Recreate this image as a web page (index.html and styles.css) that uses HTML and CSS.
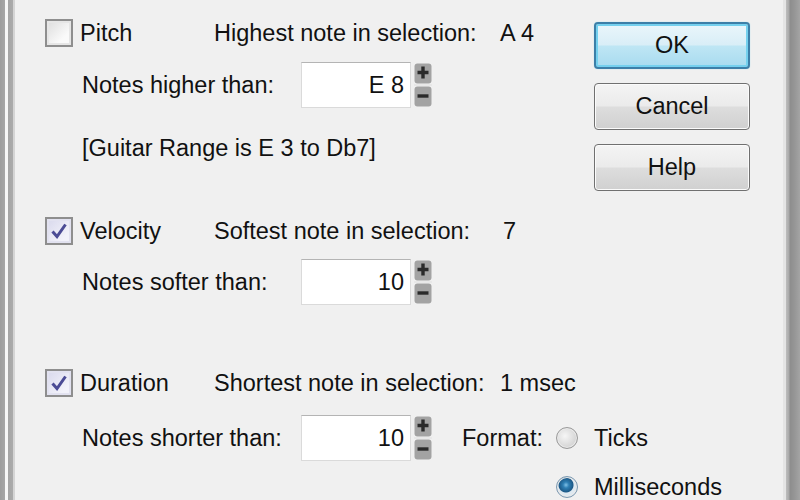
FILE: index.html
```html
<!DOCTYPE html>
<html>
<head>
<meta charset="utf-8">
<link rel="stylesheet" href="styles.css">
</head>
<body>
<div class="dialog">
  <div class="frame-left"></div>
  <div class="content">
    <div class="form">
      <section class="group g-pitch">
        <div class="head">
          <span class="check"></span>
          <span class="name">Pitch</span>
          <span class="info">Highest note in selection:</span>
          <span class="val">A 4</span>
        </div>
        <div class="ctrl">
          <span class="clabel">Notes higher than:</span>
          <span class="input">E 8</span>
          <svg class="spin" width="18" height="44" viewBox="0 0 18 44"><rect x="0.5" y="0.5" width="17" height="20" rx="3" fill="#a3a3a3"/><rect x="0.5" y="23.5" width="17" height="20" rx="3" fill="#a3a3a3"/><rect x="0" y="21" width="18" height="2" fill="#e8e8e8"/><path d="M9 3.5v12M3.5 9.5h11" stroke="#2a2a2a" stroke-width="3.4"/><path d="M3.5 33h11" stroke="#2a2a2a" stroke-width="3.4"/></svg>
        </div>
        <div class="range">[Guitar Range is E 3 to Db7]</div>
      </section>
      <section class="group g-vel">
        <div class="head">
          <span class="check on"><svg width="20" height="20" viewBox="0 0 20 20"><path d="M3.5 10.5l4.5 5 8.5-12" fill="none" stroke="#4b4b95" stroke-width="3"/></svg></span>
          <span class="name">Velocity</span>
          <span class="info">Softest note in selection:</span>
          <span class="val v2">7</span>
        </div>
        <div class="ctrl">
          <span class="clabel">Notes softer than:</span>
          <span class="input">10</span>
          <svg class="spin" width="18" height="44" viewBox="0 0 18 44"><rect x="0.5" y="0.5" width="17" height="20" rx="3" fill="#a3a3a3"/><rect x="0.5" y="23.5" width="17" height="20" rx="3" fill="#a3a3a3"/><rect x="0" y="21" width="18" height="2" fill="#e8e8e8"/><path d="M9 3.5v12M3.5 9.5h11" stroke="#2a2a2a" stroke-width="3.4"/><path d="M3.5 33h11" stroke="#2a2a2a" stroke-width="3.4"/></svg>
        </div>
      </section>
      <section class="group g-dur">
        <div class="head">
          <span class="check on"><svg width="20" height="20" viewBox="0 0 20 20"><path d="M3.5 10.5l4.5 5 8.5-12" fill="none" stroke="#4b4b95" stroke-width="3"/></svg></span>
          <span class="name">Duration</span>
          <span class="info">Shortest note in selection:</span>
          <span class="val">1 msec</span>
        </div>
        <div class="ctrl">
          <span class="clabel">Notes shorter than:</span>
          <span class="input">10</span>
          <svg class="spin" width="18" height="44" viewBox="0 0 18 44"><rect x="0.5" y="0.5" width="17" height="20" rx="3" fill="#a3a3a3"/><rect x="0.5" y="23.5" width="17" height="20" rx="3" fill="#a3a3a3"/><rect x="0" y="21" width="18" height="2" fill="#e8e8e8"/><path d="M9 3.5v12M3.5 9.5h11" stroke="#2a2a2a" stroke-width="3.4"/><path d="M3.5 33h11" stroke="#2a2a2a" stroke-width="3.4"/></svg>
          <span class="fmt">Format:</span>
          <div class="radios">
            <div class="ropt"><span class="radio"></span><span>Ticks</span></div>
            <div class="ropt"><span class="radio sel"></span><span>Milliseconds</span></div>
          </div>
        </div>
      </section>
    </div>
    <div class="buttons">
      <button class="btn ok">OK</button>
      <button class="btn">Cancel</button>
      <button class="btn">Help</button>
    </div>
  </div>
  <div class="frame-right"></div>
</div>
</body>
</html>
```

FILE: styles.css
```css
html, body {
  margin: 0;
  padding: 0;
  background: #f0f0f0;
}
body {
  font-family: "Liberation Sans", Arial, sans-serif;
  font-size: 23.5px;
  color: #111;
  overflow: hidden;
}
.dialog {
  display: flex;
  width: 800px;
  height: 500px;
  overflow: hidden;
}
.frame-left {
  width: 15px;
  flex: none;
  background: linear-gradient(to right, #9c9c9c 0, #a6a6a6 5px, #f6f6f6 5px, #f6f6f6 8px, #a4a4a4 8px, #ababab 13px, #d4d4d4 13px, #d4d4d4 15px);
}
.frame-right {
  width: 17px;
  flex: none;
  background: linear-gradient(to right, #e4e4e4 0, #e4e4e4 3px, #bdbdbd 3px, #a9a9a9 6px, #8d8d8d 7px, #979797 12px, #a4a4a4 17px);
}
.content {
  flex: 1;
  display: flex;
  padding-left: 30px;
  min-width: 0;
}
.form {
  width: 530px;
  flex: none;
}
.group .head {
  display: flex;
  align-items: center;
  height: 28px;
  white-space: nowrap;
}
.head > span {
  flex: none;
}
.check {
  width: 24px;
  height: 24px;
  border: 2px solid #8e8e8e;
  background: linear-gradient(135deg, #dcdcdc, #fafafa 70%);
  box-shadow: inset 0 0 0 2px #e6e6e6;
  margin-right: 7px;
  display: flex;
  align-items: center;
  justify-content: center;
}
.check.on {
  background: linear-gradient(135deg, #d8d8ec, #f2f2fa 75%);
  box-shadow: inset 0 0 0 2px #e2e2f0;
}
.name {
  width: 134px;
}
.info {
  width: 286px;
}
.val.v2 {
  padding-left: 3px;
}
.ctrl {
  display: flex;
  align-items: center;
  padding-left: 37px;
  white-space: nowrap;
}
.clabel {
  width: 219px;
  flex: none;
}
.input {
  width: 110px;
  height: 46px;
  box-sizing: border-box;
  background: #fff;
  border: 1px solid #dadada;
  border-top-color: #b4b4b4;
  text-align: right;
  padding-right: 6px;
  line-height: 44px;
  flex: none;
}
.spin {
  margin-left: 3px;
  flex: none;
}
.g-pitch {
  padding-top: 19px;
}
.g-pitch .ctrl {
  margin-top: 15px;
}
.range {
  padding-left: 37px;
  margin-top: 26px;
  line-height: 28px;
}
.g-vel {
  margin-top: 55px;
}
.g-vel .ctrl {
  margin-top: 14px;
}
.g-dur {
  margin-top: 64px;
}
.g-dur .ctrl {
  margin-top: 18px;
  align-items: flex-start;
}
.g-dur .ctrl .clabel, .g-dur .ctrl .fmt {
  line-height: 46px;
}
.g-dur .ctrl .spin {
  margin-top: 1px;
}
.fmt {
  margin-left: 30px;
  width: 94px;
  flex: none;
}
.radios {
  display: flex;
  flex-direction: column;
  gap: 3px;
}
.ropt {
  display: flex;
  align-items: center;
  height: 46px;
  white-space: nowrap;
}
.radio {
  width: 20px;
  height: 20px;
  border-radius: 50%;
  border: 1px solid #9a9a9a;
  background: radial-gradient(circle at 40% 40%, #f6f6f6, #d4d4d4 70%);
  box-shadow: inset 0 0 0 1px #eaeaea;
  margin-right: 16px;
  flex: none;
}
.radio.sel {
  border-color: #7b98b0;
  background: radial-gradient(circle at 45% 40%, #7fc0e6 0, #2e7fb4 3px, #1d5a88 7px, #dfe9f1 8px, #dfe9f1 10px);
}
.buttons {
  display: flex;
  flex-direction: column;
  gap: 14px;
  padding-top: 22px;
  margin-left: 19px;
}
.btn {
  width: 156px;
  height: 47px;
  font-family: inherit;
  font-size: 23.5px;
  color: #111;
  border: 1px solid #707070;
  border-radius: 4px;
  background: linear-gradient(#f4f4f4 0, #ebebeb 48%, #dddddd 52%, #d0d0d0 100%);
  box-shadow: inset 0 0 0 1px #fbfbfb;
  padding: 0;
}
.btn.ok {
  border: 2px solid #3c7fa8;
  background: linear-gradient(#eaf6fb 0, #d9eef7 48%, #bee6f4 52%, #a8dbef 100%);
  box-shadow: inset 0 0 0 2px #74d0ee, 0 0 1px #7fd3ef;
}
```
